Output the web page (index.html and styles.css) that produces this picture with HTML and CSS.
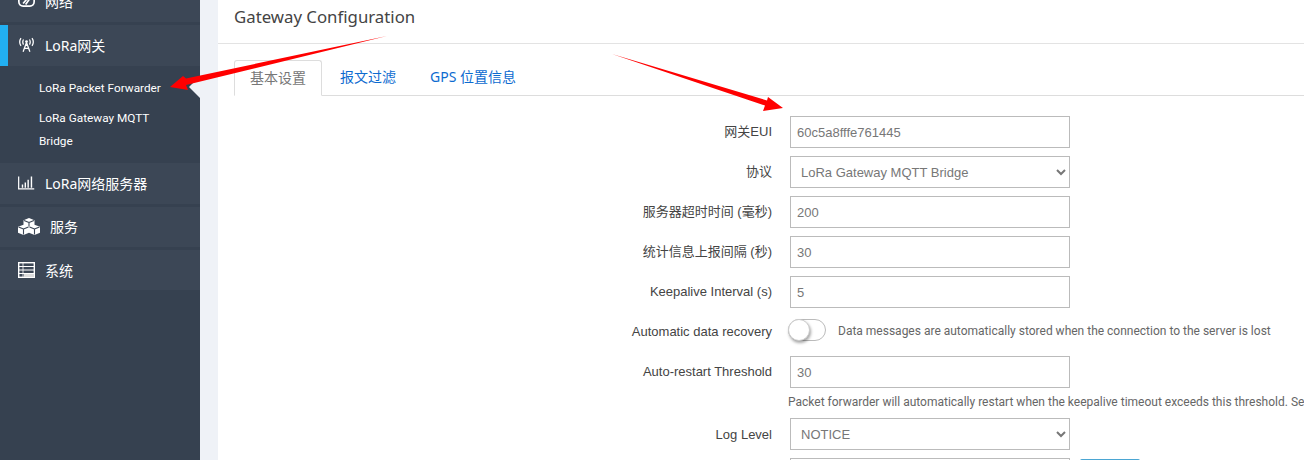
FILE: index.html
```html
<!DOCTYPE html>
<html lang="zh">
<head>
<meta charset="utf-8">
<title>Gateway Configuration</title>
<link rel="stylesheet" href="styles.css">
</head>
<body>
<div class="app">
  <aside class="sidebar">
    <nav class="menu">
      <a class="item first">
        <svg class="ico" viewBox="0 0 20 16"><g fill="none" stroke="#fff" stroke-width="2"><rect x="1" y="2" width="18" height="12" rx="5"/><path d="M6 11l5-6M9 12l5-7"/></g></svg>
        <span>网络</span>
      </a>
      <a class="item active">
        <svg class="ico" viewBox="0 0 20 18"><g fill="none" stroke="#fff" stroke-width="1.500"><path d="M10 6L6 17M10 6l4 11M7.500 13h5M8.500 9.500h3"/><path d="M6.500 2.500C5 5 5 6 6.500 8.500M13.500 2.500C15 5 15 6 13.500 8.500M3.500 1C1.500 4 1.500 7 3.500 10M16.500 1c2 3 2 6 0 9"/></g><circle cx="10" cy="5" r="1.600" fill="#fff"/></svg>
        <span>LoRa网关</span>
      </a>
      <div class="submenu">
        <a class="sub">LoRa Packet Forwarder</a>
        <a class="sub">LoRa Gateway MQTT Bridge</a>
        <span class="pointer"></span>
      </div>
      <a class="item net">
        <svg class="ico" viewBox="0 0 18 16"><path d="M.7 1v13.300h16.500" fill="none" stroke="#fff" stroke-width="1.300"/><path d="M4 9.500h1.500V13H4zM7 7.500h1.500V13H7zM10 4.500h1.500V13H10zM13.500 1H15v12h-1.500z" fill="#fff"/></svg>
        <span>LoRa网络服务器</span>
      </a>
      <a class="item services">
        <svg class="ico wide" viewBox="2 1 20 17" preserveAspectRatio="none"><path d="M12 1l5 2.200v4.500l5 2v6L17 18l-5-2.300L7 18l-5-2.300v-6l5-2V3.200z" fill="#fff"/><path d="M12 5.500L7.500 3.500M12 5.500l4.500-2M12 5.500v4M7 12L2.500 10M7 12l4.500-2M7 12v5.500M17 12l-4.500-2M17 12l4.500-2M17 12v5.500" stroke="#3c4756" stroke-width="1" fill="none"/></svg>
        <span>服务</span>
      </a>
      <a class="item last">
        <svg class="ico" viewBox="0 0 17 16"><rect x=".7" y=".7" width="15.600" height="14.600" fill="none" stroke="#fff" stroke-width="1.400"/><path d="M1 4.500h15M1 8h15M1 11.500h15" stroke="#fff" stroke-width="1.200"/><path d="M5 1v14" stroke="#fff" stroke-width=".8"/><rect x="6" y="12" width="10" height="3" fill="#ddd"/></svg>
        <span>系统</span>
      </a>
    </nav>
  </aside>
  <main class="main">
    <h1 class="title">Gateway Configuration</h1>
    <div class="tabs">
      <a class="tab current">基本设置</a>
      <a class="tab">报文过滤</a>
      <a class="tab">GPS 位置信息</a>
    </div>
    <form class="form">
      <div class="row"><label class="cjk">网关EUI</label><input class="field" value="60c5a8fffe761445"></div>
      <div class="row"><label class="cjk">协议</label><select class="field"><option>LoRa Gateway MQTT Bridge</option></select></div>
      <div class="row"><label class="cjk">服务器超时时间 (毫秒)</label><input class="field" value="200"></div>
      <div class="row"><label class="cjk">统计信息上报间隔 (秒)</label><input class="field" value="30"></div>
      <div class="row"><label>Keepalive Interval (s)</label><input class="field" value="5"></div>
      <div class="row toggle-row">
        <label>Automatic data recovery</label>
        <span class="switch"><span class="knob"></span></span>
        <span class="hint">Data messages are automatically stored when the connection to the server is lost</span>
      </div>
      <div class="row tight"><label>Auto-restart Threshold</label><input class="field" value="30"></div>
      <p class="help">Packet forwarder will automatically restart when the keepalive timeout exceeds this threshold. Set to 0 to disable.</p>
      <div class="row"><label class="low">Log Level</label><select class="field"><option>NOTICE</option></select></div>
      <div class="row"><label></label><input class="field"><button class="btn" type="button"></button></div>
    </form>
    <svg class="arrows" viewBox="0 0 1304 460" width="1304" height="460">
      <path d="M387 36L186 78.500L183 76L170 87L188 90L186 85z" fill="#f00"/>
      <path d="M612 54L767 100.500L768 97L783 108L763 111L765 105.500z" fill="#f00"/>
    </svg>
  </main>
</div>
</body>
</html>
```
FILE: styles.css
```css
* { box-sizing: border-box; }
html, body { margin: 0; height: 100%; overflow: hidden; background: #fff; }
body { font-family: "Liberation Sans", "Noto Sans CJK SC", sans-serif; font-size: 13px; color: #444; }
.app { display: flex; height: 460px; }

.sidebar { width: 218px; flex: none; background: #eff2f7; padding-right: 18px; }
.menu { height: 100%; background: #364150; overflow: hidden; color: #fff; font-family: "Noto Sans", "Noto Sans CJK SC", sans-serif; }
.item { display: flex; align-items: center; gap: 9px; height: 43px; padding-left: 18px; padding-bottom: 2px; background: #3c4756; border-bottom: 3px solid #364150; font-size: 14px; color: #fff; }
.item.first { height: 25px; align-items: flex-end; padding-bottom: 13px; line-height: 14px; overflow: hidden; }
.item.active { height: 41px; border-left: 8px solid #22b0f2; padding-left: 10px; border-bottom: 0; }
.item.net { height: 44px; }
.item.services { gap: 10px; }
.item.last { height: 40px; border-bottom: 0; padding-bottom: 0; }
.ico { width: 17px; height: 16px; flex: none; margin-right: 1px; }
.ico.wide { width: 22px; height: 17px; margin-right: 0; }
.submenu { position: relative; padding: 7px 30px 7px 39px; height: 97px; font-family: "Roboto", sans-serif; }
.sub { display: block; font-size: 11.800px; line-height: 23px; color: #fff; padding: 4px 0; }
.sub + .sub { padding-top: 3px; }
.pointer { position: absolute; right: 0; top: 10px; border-style: solid; border-width: 11px 11px 11px 0; border-color: transparent #eff2f7 transparent transparent; }

.main { flex: 1; position: relative; min-width: 0; white-space: nowrap; }
.title { margin: 0; height: 44px; padding: 6px 0 0 16px; font: 400 16.800px/22px "Noto Sans", sans-serif; color: #444; border-bottom: 1px solid #e3e3e3; }
.tabs { display: flex; height: 36px; margin: 16px 0 0 16px; border-bottom: 1px solid #ddd; }
.tab { display: block; margin-left: 2px; padding: 8px 16px 0; font: 14px/18px "Noto Sans", "Noto Sans CJK SC", sans-serif; color: #0d6bd0; }
.tab.current { width: 88px; margin-left: 0; padding: 8px 15px 0; color: #777; background: #fff; border: 1px solid #ddd; border-bottom: 1px solid #fff; border-radius: 3px 3px 0 0; height: 36px; }

.form { padding-top: 20px; }
.row { display: flex; align-items: center; height: 32px; margin-bottom: 8px; }
.row label { width: 554px; flex: none; text-align: right; font-size: 13px; color: #444; position: relative; top: -1px; }
.row label.cjk { top: -2px; }
.row label.low { top: 0; }
.toggle-row label { top: 1px; }
.field { width: 280px; height: 32px; margin-left: 18px; padding: 0 6px; border: 1px solid #bbb; border-radius: 0; background: #fff; font: 13px "Liberation Sans", "Noto Sans CJK SC", sans-serif; color: #777; flex: none; outline: none; }
.toggle-row { padding-bottom: 4px; }
.switch { position: relative; width: 38px; height: 22px; margin-left: 16px; border: 1px solid #bbb; border-radius: 11px; background: #fff; flex: none; }
.knob { position: absolute; left: -1px; top: -1px; width: 22px; height: 22px; border-radius: 50%; background: #fff; border: 1px solid #ccc; box-shadow: 1px 2px 3px rgba(0,0,0,.35); }
.hint { margin-left: 12px; font: 12px "Roboto", sans-serif; color: #666; position: relative; top: 1px; }
.row.tight { margin-bottom: 3px; }
.help { margin: 0 0 6px 570px; height: 21px; font: 12px/22px "Roboto", sans-serif; color: #666; }
.btn { width: 60px; height: 32px; margin-left: 10px; margin-top: 1px; border: 0; border-radius: 2px; background: #4ba6d3; flex: none; }

.arrows { position: absolute; left: -218px; top: 0; pointer-events: none; }
```
